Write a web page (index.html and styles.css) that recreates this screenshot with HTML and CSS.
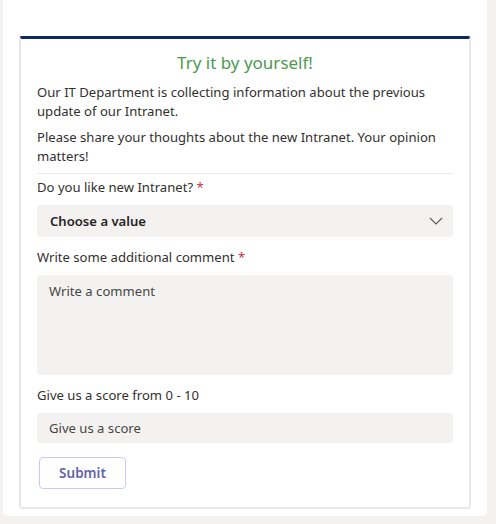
FILE: index.html
```html
<!DOCTYPE html>
<html>
<head>
<meta charset="utf-8">
<link rel="stylesheet" href="styles.css">
</head>
<body>
<div class="panel">
  <div class="card">
    <h2 class="title">Try it by yourself!</h2>
    <p class="text">Our IT Department is collecting information about the previous update of our Intranet.</p>
    <p class="text">Please share your thoughts about the new Intranet. Your opinion matters!</p>
    <div class="divider"></div>
    <div class="field">
      <label class="label">Do you like new Intranet? <span class="req">*</span></label>
      <div class="select">
        <span class="select-value">Choose a value</span>
        <svg class="chevron" width="14" height="8" viewBox="0 0 14 8"><path d="M1 1 L7 7 L13 1" fill="none" stroke="#605e5c" stroke-width="1.2"/></svg>
      </div>
    </div>
    <div class="field">
      <label class="label">Write some additional comment <span class="req">*</span></label>
      <div class="textarea">Write a comment</div>
    </div>
    <div class="field field-score">
      <label class="label">Give us a score from 0 - 10</label>
      <div class="input">Give us a score</div>
    </div>
    <button class="submit">Submit</button>
  </div>
</div>
</body>
</html>
```
FILE: styles.css
```css
html, body {
  margin: 0;
  padding: 0;
  background: #f3f2f1;
  font-family: "Noto Sans", "Open Sans", sans-serif;
  color: #323130;
}
.panel {
  margin-left: 3px;
  width: 484px;
  height: 516px;
  box-sizing: border-box;
  background: #ffffff;
  border-radius: 0 0 5px 5px;
  padding: 36px 16px 0 16px;
}
.card {
  box-sizing: border-box;
  width: 452px;
  height: 473px;
  border: 2px solid #e8e8e8;
  border-top: 3px solid #0c2b66;
  border-radius: 3px;
  padding: 12px 16px 16px 16px;
  display: flex;
  flex-direction: column;
}
.title {
  margin: 0;
  font-weight: 400;
  font-size: 17px;
  line-height: 24px;
  color: #4c9a4e;
  text-align: center;
}
.text {
  margin: 8px 0 0 0;
  font-size: 13.1px;
  line-height: 18.7px;
}
.divider {
  height: 1px;
  background: #edebe9;
  margin-top: 7px;
}
.field {
  display: flex;
  flex-direction: column;
}
.label {
  font-size: 13.1px;
  line-height: 20px;
  margin-top: 3px;
  margin-bottom: 8px;
}
.field + .field .label {
  margin-top: 10px;
}
.field-score .label {
  margin-top: 11px;
}
.req {
  color: #c4314b;
}
.select {
  height: 32px;
  background: #f3f2f1;
  border-radius: 4px;
  display: flex;
  align-items: center;
  justify-content: space-between;
  padding: 0 10px 0 13px;
}
.select-value {
  font-size: 13.1px;
  font-weight: 600;
  color: #252423;
}
.textarea {
  height: 100px;
  box-sizing: border-box;
  background: #f3f2f1;
  border-radius: 4px;
  padding: 6px 12px;
  font-size: 13.1px;
  line-height: 20px;
  color: #484644;
}
.input {
  height: 30px;
  box-sizing: border-box;
  background: #f3f2f1;
  border-radius: 4px;
  padding: 5px 12px;
  font-size: 13.1px;
  line-height: 20px;
  color: #484644;
}
.submit {
  align-self: flex-start;
  margin: 14px 0 0 2px;
  width: 87px;
  height: 32px;
  background: #ffffff;
  border: 1px solid #c5cbfa;
  border-radius: 4px;
  font-family: inherit;
  font-size: 13.5px;
  font-weight: 600;
  color: #6264a7;
}
```
